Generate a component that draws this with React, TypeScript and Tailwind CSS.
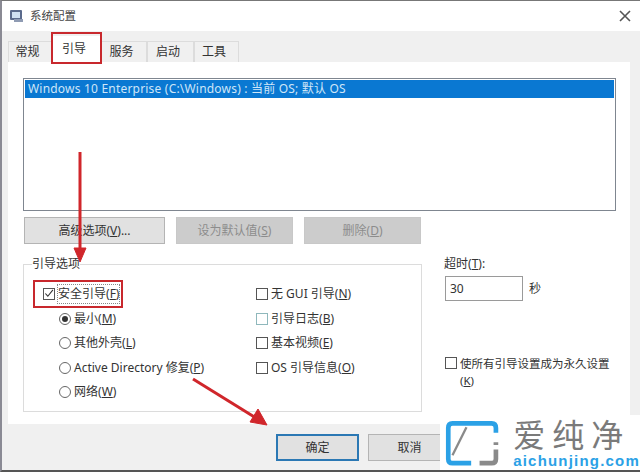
const font = "[font-family:'Noto_Sans','Noto_Sans_CJK_SC',sans-serif]";

const U = ({ k }: { k: string }) => (
	<>
		(<span className="underline">{k}</span>)
	</>
);

const Tab = ({ text, width, active }: { text: string; width: string; active?: boolean }) => (
	<div className={`${width} ${active ? "h-[26px] bg-white" : "h-[21px] bg-[#f0f0f0] border border-b-0 border-[#dcdcdc]"} flex items-center justify-center pr-[5px] text-[12px] text-[#333]`}>
		{text}
	</div>
);

const Btn = ({ width, disabled, children }: { width: string; disabled?: boolean; children: React.ReactNode }) => (
	<div
		className={`${width} h-[27px] flex items-center justify-center text-[12px] border ${
			disabled ? "bg-[#cccccc] border-[#c8c8c8] text-[#8c8c8c]" : "bg-[#e1e1e1] border-[#b4b4b4] text-[#333]"
		}`}>
		<span>{children}</span>
	</div>
);

const Check = ({ checked, tint }: { checked?: boolean; tint?: boolean }) => (
	<div className={`w-[12px] h-[12px] shrink-0 border bg-white flex items-center justify-center ${tint ? "border-[#8fb8bc]" : "border-[#555]"}`}>
		{checked && (
			<svg width="11" height="11" viewBox="0 0 11 11" fill="none" stroke="#333" strokeWidth="1.2">
				<path d="M1.5 5.5 L4.2 8.5 L9.8 1.5" />
			</svg>
		)}
	</div>
);

const Radio = ({ checked }: { checked?: boolean }) => (
	<div className="w-[12px] h-[12px] shrink-0 rounded-full border border-[#666] bg-white flex items-center justify-center">
		{checked && <div className="w-[6px] h-[6px] rounded-full bg-[#333]" />}
	</div>
);

const RadioRow = ({ checked, children }: { checked?: boolean; children: React.ReactNode }) => (
	<div className="h-[24.5px] flex items-center gap-[3px] pl-[35px] text-[12px] text-[#333]">
		<Radio checked={checked} />
		<span>{children}</span>
	</div>
);

const CheckRow = ({ tint, children }: { tint?: boolean; children: React.ReactNode }) => (
	<div className="h-[24.5px] flex items-center gap-[3px] text-[12px] text-[#333]">
		<Check tint={tint} />
		<span>{children}</span>
	</div>
);

const Logo = () => (
	<svg width="58" height="50" viewBox="0 0 58 50" fill="none">
		<path d="M28 45.5 H8 Q3.5 45.5 3.5 41 V8 Q3.5 3 8 3 H50 Q54.5 3 54.5 8 V13" stroke="#2ba1e6" strokeWidth="5" />
		<path d="M8 37 L23 7" stroke="#8a8a8a" strokeWidth="2.5" />
		<path d="M54.5 23 V26 M54.5 31 V41 Q54.5 45.5 50 45.5 H37" stroke="#8a8a8a" strokeWidth="5" />
	</svg>
);

export default function App() {
	return (
		<div className={`${font} relative w-[640px] h-[472px] overflow-hidden bg-[#f0f0f0] border-t border-t-[#777] border-l-2 border-l-[#8a8a94] border-b-2 border-b-[#555]`}>
			<div className="h-[30px] bg-white flex items-center justify-between pl-[7px] pr-[8px]">
				<div className="flex items-center gap-[5px]">
					<svg width="16" height="16" viewBox="0 0 16 16">
						<rect x="1" y="2" width="12" height="10" rx="1" fill="#5a6a8c" />
						<rect x="3" y="4" width="8" height="6" fill="#cfe0f2" />
						<rect x="5" y="11" width="9" height="3" fill="#8f9bb3" />
					</svg>
					<span className="text-[11.5px] text-[#444]">系统配置</span>
				</div>
				<svg width="14" height="14" viewBox="0 0 14 14" stroke="#555" strokeWidth="1.6">
					<path d="M2 2 L12 12 M12 2 L2 12" />
				</svg>
			</div>

			<div className="h-[31px] flex items-end pl-[6px]">
				<Tab text="常规" width="w-[44px]" />
				<Tab text="引导" width="w-[49px]" active />
				<Tab text="服务" width="w-[46px]" />
				<Tab text="启动" width="w-[47px]" />
				<Tab text="工具" width="w-[45px]" />
			</div>

			<div className="ml-[6px] w-[622px] h-[362px] bg-white pt-[16px] pl-[15px]">
				<div className="w-[593px] h-[133px] border border-[#7f8690] p-px">
					<div className="h-[18px] bg-[#0a78d2] pl-[3px] flex items-center text-[12px] text-[#cfe6f8] tracking-[0.2px]">Windows 10 Enterprise (C:\Windows) : 当前 OS; 默认 OS</div>
				</div>

				<div className="flex gap-[11px] mt-[6px] ml-px">
					<Btn width="w-[141px]">
						高级选项<U k="V" />...
					</Btn>
					<Btn width="w-[117px]" disabled>
						设为默认值<U k="S" />
					</Btn>
					<Btn width="w-[117px]" disabled>
						删除<U k="D" />
					</Btn>
				</div>

				<div className="flex mt-[20px]">
					<div className="relative w-[399px] h-[148px] border border-[#dcdcdc]">
						<span className="absolute left-[8px] -top-[9px] bg-white text-[12px] leading-[16px] text-[#333]">引导选项</span>
						<div className="flex pt-[16px]">
							<div className="w-[232px]">
								<div className="h-[25.5px] flex items-center gap-[3px] pl-[19px] text-[12px] text-[#333]">
									<Check checked />
									<span className="outline-1 outline-dotted outline-[#888]">
										安全引导<U k="F" />
									</span>
								</div>
								<RadioRow checked>
									最小<U k="M" />
								</RadioRow>
								<RadioRow>
									其他外壳<U k="L" />
								</RadioRow>
								<RadioRow>
									Active Directory 修复<U k="P" />
								</RadioRow>
								<RadioRow>
									网络<U k="W" />
								</RadioRow>
							</div>
							<div className="pt-px">
								<CheckRow>
									无 GUI 引导<U k="N" />
								</CheckRow>
								<CheckRow tint>
									引导日志<U k="B" />
								</CheckRow>
								<CheckRow>
									基本视频<U k="E" />
								</CheckRow>
								<CheckRow>
									OS 引导信息<U k="O" />
								</CheckRow>
							</div>
						</div>
					</div>

					<div className="ml-[22px] -mt-[8px] w-[172px] text-[12px] text-[#333]">
						<div className="leading-[16px]">
							超时<U k="T" />:
						</div>
						<div className="flex items-center mt-[4px] ml-px">
							<div className="w-[78px] h-[25px] border border-[#9a9a9a] pl-[4px] flex items-center">30</div>
							<span className="ml-[6px]">秒</span>
						</div>
						<div className="flex gap-[3px] mt-[54px] ml-px">
							<div className="pt-[2px]">
								<Check />
							</div>
							<div className="leading-[17px] w-[156px] text-[11.5px]">
								使所有引导设置成为永久设置
								<br />
								<U k="K" />
							</div>
						</div>
					</div>
				</div>
			</div>

			<div className="flex gap-[9px] pl-[274px] pt-[10px]">
				<div className="w-[83px] h-[27px] flex items-center justify-center border-2 border-[#2b78b4] bg-[#e1e1e1] text-[12px] text-[#333]">确定</div>
				<div className="w-[83px] h-[27px] flex items-center justify-center border border-[#b4b4b4] bg-[#e1e1e1] text-[12px] text-[#333]">取消</div>
			</div>

			{/* annotations */}
			<div className="absolute left-[49px] top-[31px] w-[51px] h-[32px] border-2 border-[#c8282d]" />
			<div className="absolute left-[31px] top-[279px] w-[90px] h-[28px] border-2 border-[#c8282d]" />
			<svg className="absolute left-[-2px] top-[-1px]" width="640" height="472" fill="none">
				<path d="M80 152 V250" stroke="#d0262b" strokeWidth="3" />
				<path d="M74 248 H86 L80 262 Z" fill="#d0262b" stroke="#d0262b" />
				<path d="M193 379 L256 418" stroke="#d0262b" strokeWidth="3" />
				<path d="M267 425 L250 422 L258 409 Z" fill="#d0262b" stroke="#d0262b" />
			</svg>

			{/* watermark */}
			<div className="absolute right-0 -bottom-[2px] w-[200px] h-[57px] bg-white flex items-center pl-[5px]">
				<Logo />
				<div className="ml-[14px] flex flex-col items-start">
					<div className="text-[32px] leading-[32px] text-[#7a7a7a] tracking-[7px] whitespace-nowrap mb-[2px]">爱纯净</div>
					<div className="text-[15px] leading-[16px] font-bold text-[#2ba1e6] tracking-[1.2px] [font-family:'Liberation_Sans',sans-serif]">aichunjing.com</div>
				</div>
			</div>
		</div>
	);
}
